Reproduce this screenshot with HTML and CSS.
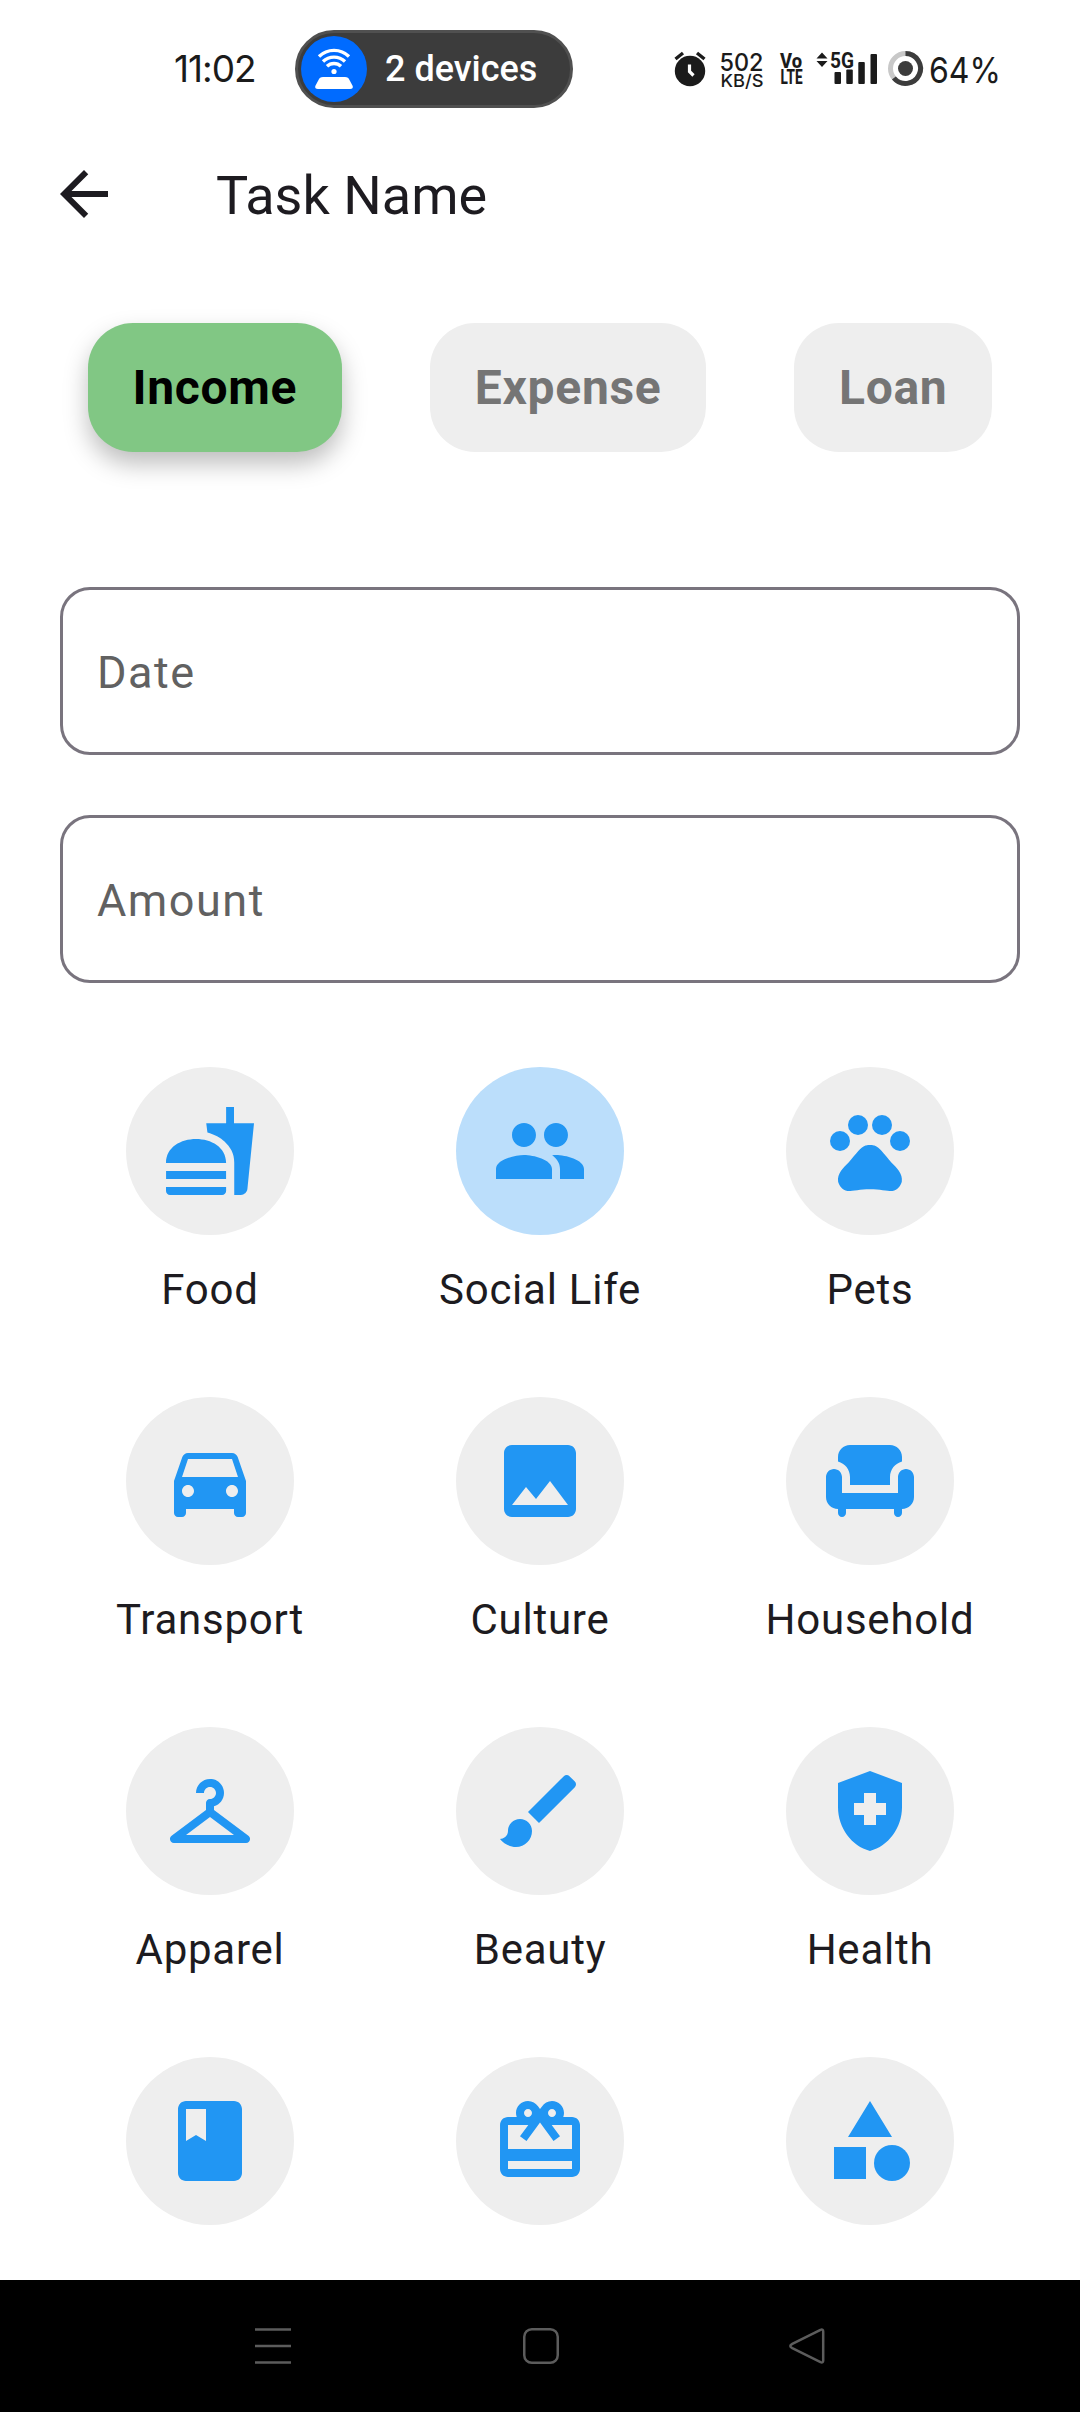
FILE: index.html
```html
<!DOCTYPE html>
<html lang="en">
<head>
<meta charset="utf-8">
<title>Task Name</title>
<link rel="stylesheet" href="styles.css">
</head>
<body>
<div class="screen">
  <div class="status">
    <span class="clock">11:02</span>
    <div class="pill">
      <svg class="pill-icon" width="66" height="66" viewBox="0 0 66 66">
        <circle cx="33" cy="33" r="33" fill="#006bff"/>
        <g fill="none" stroke="#fff" stroke-width="3.4">
          <path d="M18 20.5a21.5 21.5 0 0 1 30 0"/>
          <path d="M22 25.5a16 16 0 0 1 22 0"/>
          <path d="M26 30.3a10 10 0 0 1 14 0"/>
        </g>
        <circle cx="33" cy="35.5" r="2.6" fill="#fff"/>
        <path fill="#fff" d="M22 41h22q3.500 0 4.500 3l3.200 6q.8 3-2.700 3H17q-3.500 0-2.700-3l3.200-6q1-3 4.500-3z"/>
      </svg>
      <span class="pill-text">2 devices</span>
    </div>
    <svg class="status-icons" width="340" height="60" viewBox="670 40 340 60">
      <g fill="#1b1b1b">
        <circle cx="690" cy="71" r="15.200"/>
        <path d="M675.500 59l7.500-6M704.500 59l-7.500-6" stroke="#1b1b1b" stroke-width="3.400"/>
        <path d="M689.500 64.500v7l4 4" fill="none" stroke="#fff" stroke-width="3.200"/>
        <text class="inter" x="719.500" y="70.500" font-size="24.500" font-weight="500" textLength="44" lengthAdjust="spacingAndGlyphs">502</text>
        <text class="inter" x="720.500" y="87" font-size="17.500" font-weight="500" textLength="43" lengthAdjust="spacingAndGlyphs">KB/S</text>
        <text class="roboto" x="780" y="68" font-size="20" font-weight="800" textLength="22" lengthAdjust="spacingAndGlyphs">Vo</text>
        <text class="roboto" x="780.500" y="83.500" font-size="19.500" font-weight="800" textLength="22" lengthAdjust="spacingAndGlyphs">LTE</text>
        <path d="M822 52.500l5.500 6h-11zM822 67l5.500-6h-11z"/>
        <text class="roboto" x="830" y="67.500" font-size="21.500" font-weight="700" textLength="24" lengthAdjust="spacingAndGlyphs">5G</text>
        <rect x="834.500" y="72" width="6.500" height="12" rx="1"/>
        <rect x="846.300" y="69.500" width="6.500" height="14.500" rx="1"/>
        <rect x="858.300" y="62" width="6.500" height="22" rx="1"/>
        <rect x="870.500" y="54" width="6.500" height="30" rx="1"/>
        <circle cx="905.500" cy="68.500" r="15" fill="none" stroke="#c8c8c8" stroke-width="5"/>
        <path d="M905.500 53.500A15 15 0 1 1 893.900 78" fill="none" stroke="#3c3c3c" stroke-width="5"/>
        <circle cx="905.500" cy="68.500" r="7.500" fill="#3c3c3c"/>
        <text class="inter" x="929" y="82.500" font-size="36" textLength="72" lengthAdjust="spacingAndGlyphs">64%</text>
      </g>
    </svg>
  </div>

  <header class="appbar">
    <svg width="72" height="72" viewBox="0 0 24 24"><path d="M20 11H7.830l5.590-5.590L12 4l-8 8 8 8 1.410-1.410L7.830 13H20v-2z"/></svg>
    <h1 class="title">Task Name</h1>
  </header>

  <nav class="tabs">
    <button class="tab tab-active">Income</button>
    <button class="tab">Expense</button>
    <button class="tab">Loan</button>
  </nav>

  <div class="fields">
    <div class="field">Date</div>
    <div class="field">Amount</div>
  </div>

  <main class="grid">
    <div class="item"><div class="disc"><svg viewBox="0 0 24 24"><path d="M18.060 22.990h1.660c.84 0 1.530-.64 1.630-1.460L23 5.050h-5V1h-1.970v4.050h-4.970l.3 2.340c1.710.47 3.310 1.320 4.270 2.260 1.440 1.420 2.430 2.890 2.430 5.290v8.050zM1 21.990V21h15.030v.99c0 .55-.45 1-1.010 1H2.010c-.56 0-1.010-.45-1.010-1zm15.030-7c0-8-15.030-8-15.030 0h15.030zM1.020 17h15v2h-15z"/></svg></div><span class="label">Food</span></div>
    <div class="item"><div class="disc disc-active"><svg viewBox="0 0 24 24"><path d="M16 11c1.660 0 2.990-1.340 2.990-3S17.660 5 16 5c-1.660 0-3 1.340-3 3s1.340 3 3 3zm-8 0c1.660 0 2.990-1.340 2.990-3S9.660 5 8 5C6.340 5 5 6.340 5 8s1.340 3 3 3zm0 2c-2.330 0-7 1.170-7 3.500V19h14v-2.500c0-2.330-4.670-3.500-7-3.500zm8 0c-.29 0-.62.02-.97.05 1.160.84 1.970 1.970 1.970 3.450V19h6v-2.500c0-2.330-4.670-3.500-7-3.500z"/></svg></div><span class="label">Social Life</span></div>
    <div class="item"><div class="disc"><svg viewBox="0 0 24 24"><circle cx="4.500" cy="9.500" r="2.500"/><circle cx="9" cy="5.500" r="2.500"/><circle cx="15" cy="5.500" r="2.500"/><circle cx="19.500" cy="9.500" r="2.500"/><path d="M17.340 14.860c-.87-1.020-1.600-1.890-2.480-2.910-.46-.54-1.050-1.080-1.750-1.320-.11-.04-.22-.07-.33-.09-.25-.04-.52-.04-.78-.04s-.53 0-.79.05c-.11.02-.22.05-.33.09-.7.24-1.280.78-1.750 1.320-.87 1.020-1.600 1.890-2.480 2.910-1.310 1.310-2.920 2.760-2.620 4.790.29 1.020 1.020 2.030 2.330 2.320.73.15 3.060-.44 5.540-.44h.18c2.480 0 4.810.58 5.540.44 1.310-.29 2.040-1.310 2.330-2.320.31-2.040-1.300-3.490-2.610-4.800z"/></svg></div><span class="label">Pets</span></div>

    <div class="item"><div class="disc"><svg viewBox="0 0 24 24"><path d="M18.920 6.010C18.720 5.420 18.160 5 17.500 5h-11c-.66 0-1.210.42-1.420 1.010L3 12v8c0 .55.45 1 1 1h1c.55 0 1-.45 1-1v-1h12v1c0 .55.45 1 1 1h1c.55 0 1-.45 1-1v-8l-2.080-5.990zM6.500 16c-.83 0-1.500-.67-1.500-1.500S5.670 13 6.500 13s1.500.67 1.500 1.500S7.330 16 6.500 16zm11 0c-.83 0-1.500-.67-1.500-1.500s.67-1.500 1.500-1.500 1.500.67 1.500 1.500-.67 1.500-1.500 1.500zM5 11l1.500-4.500h11L19 11H5z"/></svg></div><span class="label">Transport</span></div>
    <div class="item"><div class="disc"><svg viewBox="0 0 24 24"><path d="M21 19V5c0-1.100-.9-2-2-2H5c-1.100 0-2 .9-2 2v14c0 1.100.9 2 2 2h14c1.100 0 2-.9 2-2zM8.500 13.500l2.500 3.010L14.500 12l4.500 6H5l3.500-4.500z"/></svg></div><span class="label">Culture</span></div>
    <div class="item"><div class="disc"><svg viewBox="0 0 24 24"><path d="M7 11v2h10v-2c0-1.860 1.280-3.410 3-3.860V6c0-1.650-1.350-3-3-3H7C5.350 3 4 4.350 4 6v1.140c1.720.45 3 2 3 3.860z"/><path d="M21 9c-1.100 0-2 .9-2 2v4H5v-4c0-1.100-.9-2-2-2s-2 .9-2 2v5c0 1.650 1.350 3 3 3v1c0 .55.45 1 1 1s1-.45 1-1v-1h12v1c0 .55.45 1 1 1s1-.45 1-1v-1c1.650 0 3-1.350 3-3v-5c0-1.100-.9-2-2-2z"/></svg></div><span class="label">Household</span></div>

    <div class="item"><div class="disc"><svg viewBox="0 0 24 24"><path d="M21.600 18.200L13 11.750v-.91c1.650-.49 2.800-2.170 2.430-4.050-.26-1.310-1.300-2.400-2.610-2.700C10.540 3.570 8.500 5.300 8.500 7.500h2c0-.83.67-1.500 1.500-1.500s1.500.67 1.500 1.500c0 .84-.69 1.520-1.530 1.500-.54-.01-.97.45-.97.99v1.760L2.400 18.200c-.77.58-.36 1.800.6 1.800h18c.96 0 1.370-1.220.6-1.800zM6 18l6-4.500 6 4.500H6z"/></svg></div><span class="label">Apparel</span></div>
    <div class="item"><div class="disc"><svg viewBox="0 0 24 24"><path d="M7 14c-1.660 0-3 1.340-3 3 0 1.310-1.160 2-2 2 .92 1.220 2.490 2 4 2 2.210 0 4-1.790 4-4 0-1.660-1.340-3-3-3zm13.710-9.370l-1.340-1.340c-.39-.39-1.020-.39-1.410 0L9 12.250 11.750 15l8.960-8.960c.39-.39.39-1.020 0-1.410z"/></svg></div><span class="label">Beauty</span></div>
    <div class="item"><div class="disc"><svg viewBox="0 0 24 24"><path fill-rule="evenodd" d="M10.500 13H8v-3h2.500V7.500h3V10H16v3h-2.500v2.500h-3V13zM12 2L4 5v6.090c0 5.050 3.410 9.760 8 10.910 4.590-1.150 8-5.860 8-10.910V5l-8-3z"/></svg></div><span class="label">Health</span></div>

    <div class="item"><div class="disc"><svg viewBox="0 0 24 24"><path d="M18 2H6c-1.100 0-2 .9-2 2v16c0 1.100.9 2 2 2h12c1.100 0 2-.9 2-2V4c0-1.100-.9-2-2-2zM6 4h5v8l-2.500-1.500L6 12V4z"/></svg></div></div>
    <div class="item"><div class="disc"><svg viewBox="0 0 24 24"><path d="M20 6h-2.180c.11-.31.18-.65.18-1 0-1.660-1.340-3-3-3-1.050 0-1.960.54-2.500 1.350l-.5.67-.5-.68C10.960 2.540 10.050 2 9 2 7.340 2 6 3.340 6 5c0 .35.07.69.18 1H4c-1.110 0-1.990.89-1.990 2L2 19c0 1.110.89 2 2 2h16c1.110 0 2-.89 2-2V8c0-1.110-.89-2-2-2zm-5-2c.55 0 1 .45 1 1s-.45 1-1 1-1-.45-1-1 .45-1 1-1zM9 4c.55 0 1 .45 1 1s-.45 1-1 1-1-.45-1-1 .45-1 1-1zm11 15H4v-2h16v2zm0-5H4V8h5.080L7 10.830 8.620 12 11 8.760l1-1.360 1 1.360L15.380 12 17 10.830 14.920 8H20v6z"/></svg></div></div>
    <div class="item"><div class="disc"><svg viewBox="0 0 24 24"><path d="M12 2l-5.500 9h11zM3 13.500h8v8H3z"/><circle cx="17.500" cy="17.500" r="4.500"/></svg></div></div>
  </main>

  <footer class="navbar">
    <svg width="36" height="36"><path d="M0 1.500h36M0 18h36M0 34.500h36"/></svg>
    <svg width="36" height="36"><rect x="1.250" y="1.250" width="33.500" height="33.500" rx="7.500"/></svg>
    <svg width="36" height="36"><path d="M31.500 1.800L3.300 15.800q-4 2.200 0 4.400l28.200 14q2.700 1 2.700-1.700V3.500q0-2.700-2.700-1.700z"/></svg>
  </footer>
</div>
</body>
</html>
```
FILE: styles.css
```css
* { box-sizing: border-box; }

body {
  margin: 0;
  background: #fff;
  font-family: Roboto, "Liberation Sans", sans-serif;
  color: #1d1b20;
}

.screen {
  width: 1080px;
  height: 2412px;
  display: flex;
  flex-direction: column;
  overflow: hidden;
}

.status {
  height: 138px;
  flex: none;
  display: flex;
  align-items: center;
  padding-left: 174px;
}

.clock {
  width: 121px;
  font-family: Inter, sans-serif;
  font-size: 37px;
  line-height: 46px;
  letter-spacing: -1px;
  color: #1b1b1b;
}

.inter { font-family: Inter, sans-serif; }
.roboto { font-family: Roboto, sans-serif; }

.pill {
  display: flex;
  align-items: center;
  width: 278px;
  height: 78px;
  border: 3px solid #505050;
  border-radius: 39px;
  background: #3c3c3c;
  padding-left: 3px;
}

.pill-text {
  margin-left: 18px;
  font-size: 36px;
  font-weight: 500;
  color: #fff;
}

.status-icons {
  flex: none;
  margin-left: 97px;
  margin-top: 2px;
}

.appbar {
  height: 112px;
  flex: none;
  display: flex;
  align-items: center;
  padding-left: 48px;
}

.appbar svg { fill: #1d1b20; }

.title {
  margin: 0 0 0 96px;
  padding-top: 3px;
  font-size: 54px;
  font-weight: 400;
  line-height: 72px;
}

.tabs {
  flex: none;
  display: flex;
  justify-content: space-evenly;
  margin-top: 73px;
}

.tab {
  height: 129px;
  padding: 0 45px;
  border: 0;
  border-radius: 45px;
  background: #eee;
  color: #757575;
  font: 700 48px Roboto, sans-serif;
  letter-spacing: 0.7px;
}

.tab-active {
  background: #81c784;
  color: #000;
  box-shadow: 0 12px 24px rgba(0, 0, 0, 0.26);
}

.fields {
  flex: none;
  display: flex;
  flex-direction: column;
  gap: 60px;
  padding: 135px 60px 0;
}

.field {
  height: 168px;
  display: flex;
  align-items: center;
  padding: 2px 0 0 34px;
  border: 3px solid #79747e;
  border-radius: 30px;
  font-size: 45px;
  letter-spacing: 1.5px;
  color: #616161;
}

.grid {
  flex: none;
  display: grid;
  grid-template-columns: repeat(3, 330px);
  grid-auto-rows: 330px;
  justify-content: center;
  height: 1297px;
  padding-top: 84px;
  overflow: hidden;
}

.item {
  display: flex;
  flex-direction: column;
  align-items: center;
  gap: 25px;
}

.disc {
  width: 168px;
  height: 168px;
  flex: none;
  display: flex;
  align-items: center;
  justify-content: center;
  border-radius: 50%;
  background: #eee;
}

.disc-active { background: #bbdefb; }
.disc svg { width: 96px; height: 96px; fill: #2196f3; }

.label {
  font-size: 42px;
  line-height: 60px;
  letter-spacing: 0.75px;
}

.navbar {
  height: 132px;
  flex: none;
  display: flex;
  align-items: center;
  gap: 231px;
  padding-left: 255px;
  background: #000;
}

.navbar svg {
  fill: none;
  stroke: #5c5c5c;
  stroke-width: 2.5;
}

.navbar svg:nth-child(2) {
  margin: 0 -1px 0 1px;
}
```
